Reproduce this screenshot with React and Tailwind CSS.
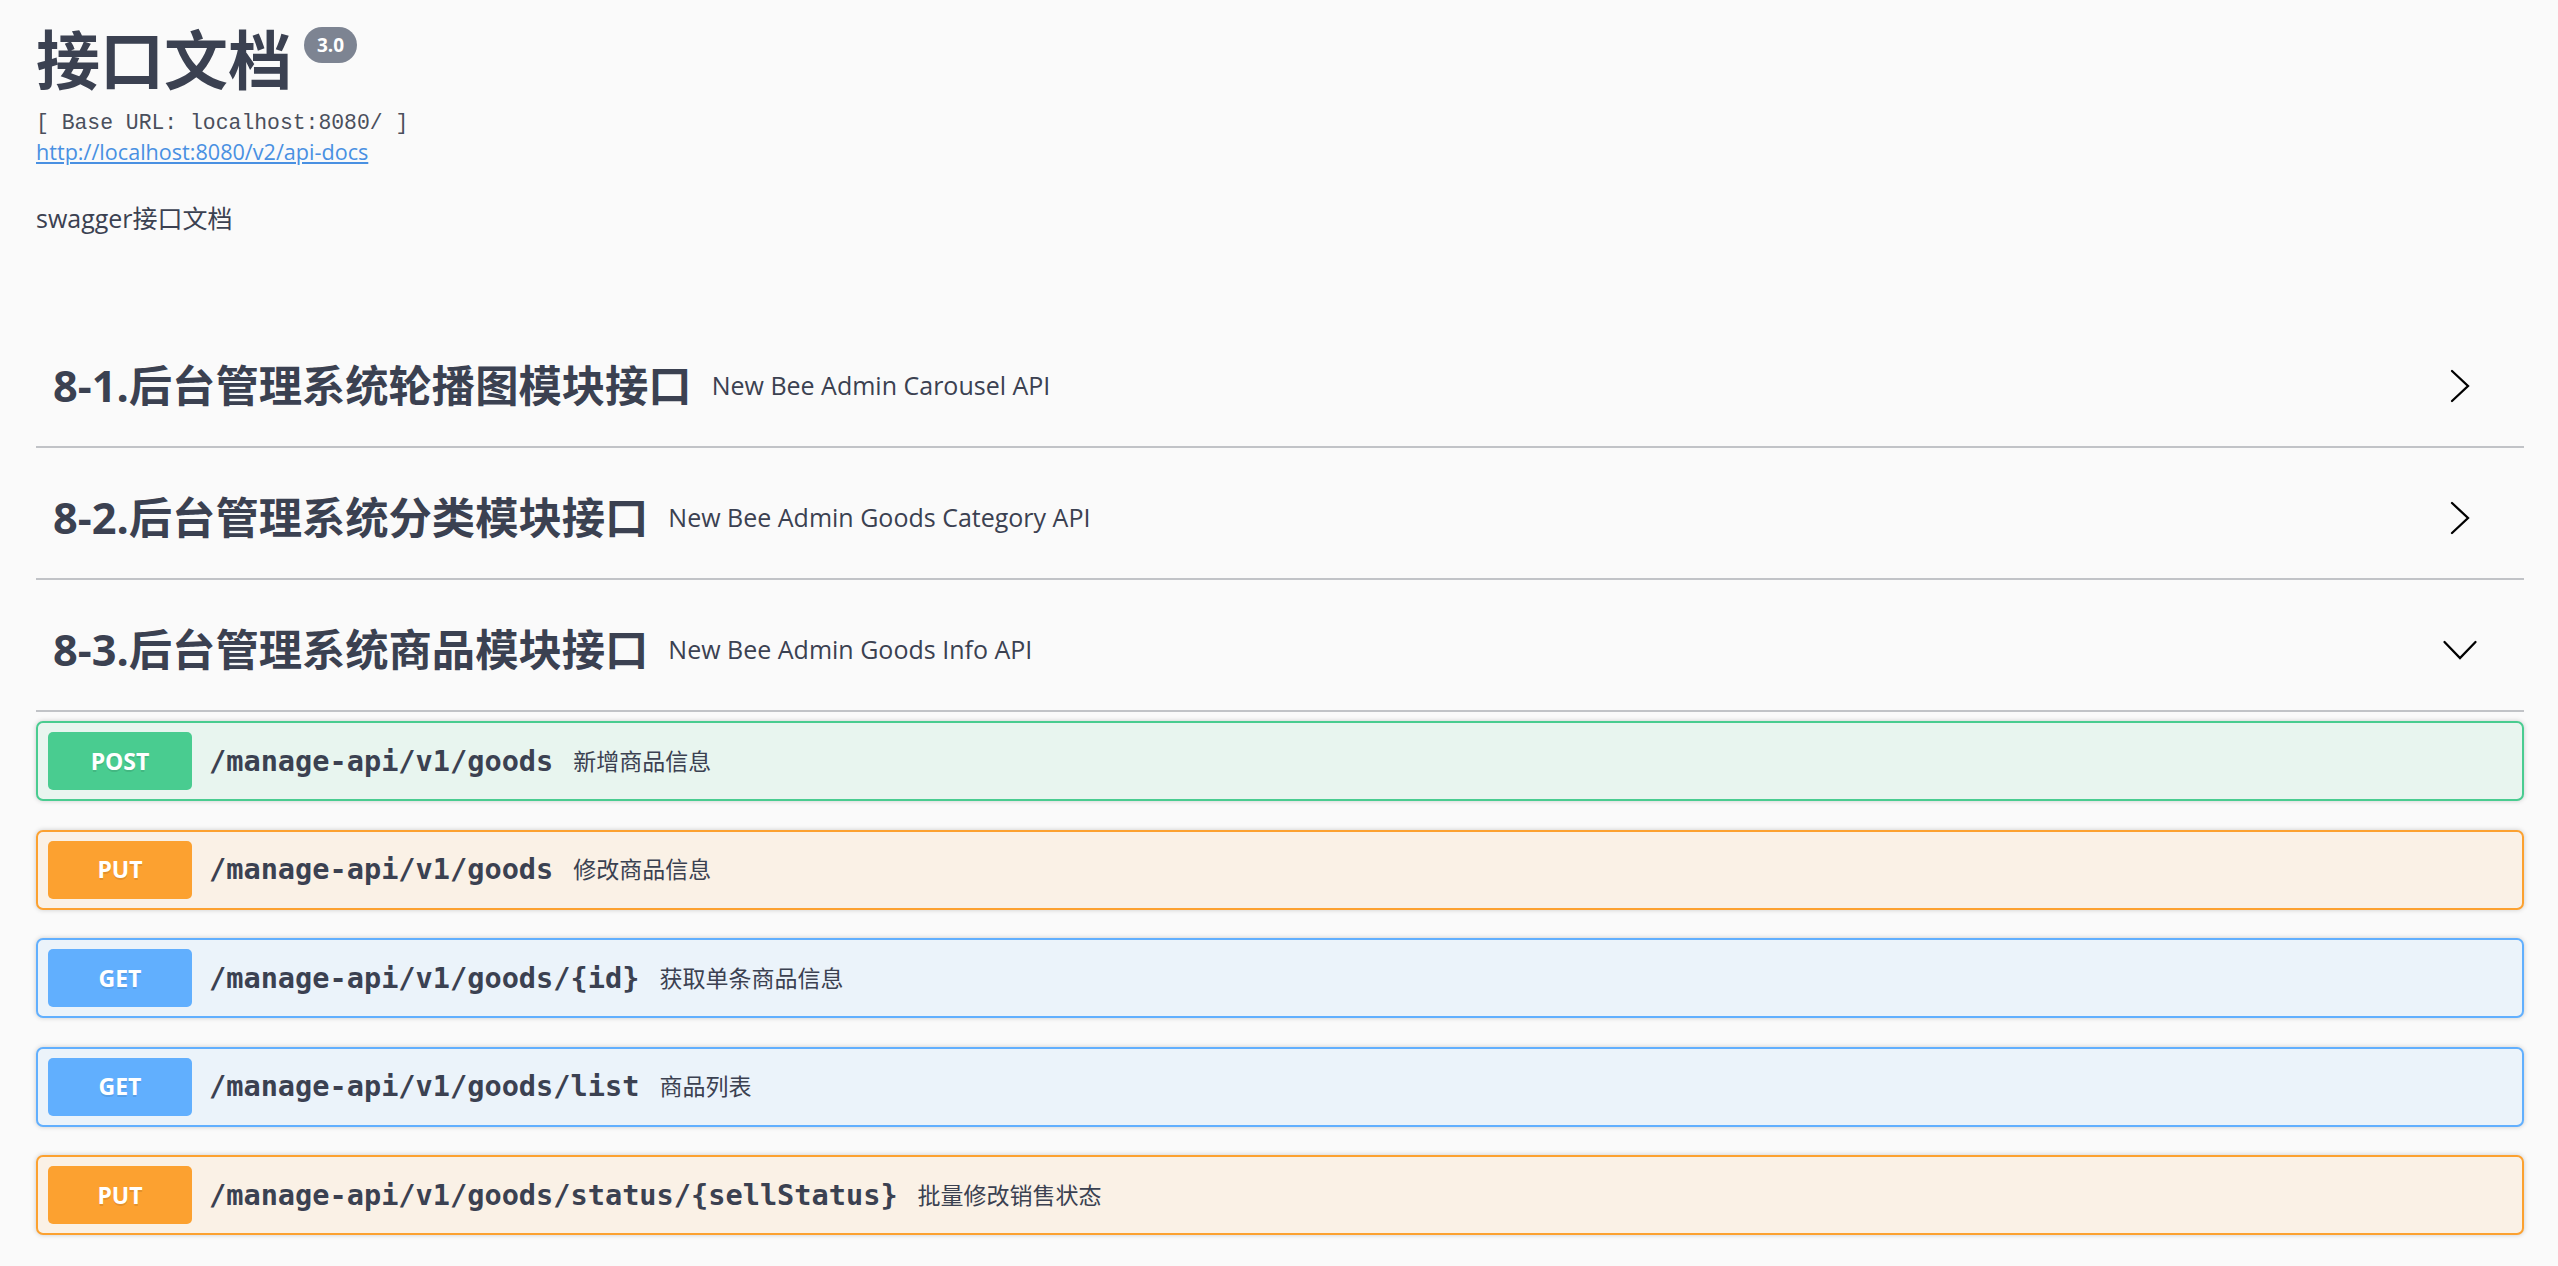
import React from "react";

const sans = { fontFamily: '"Open Sans", "Noto Sans CJK SC", sans-serif' };

const tags = [
  { title: "8-1.后台管理系统轮播图模块接口", sub: "New Bee Admin Carousel API", open: false },
  { title: "8-2.后台管理系统分类模块接口", sub: "New Bee Admin Goods Category API", open: false },
  { title: "8-3.后台管理系统商品模块接口", sub: "New Bee Admin Goods Info API", open: true },
];

const ops = [
  { m: "POST", path: "/manage-api/v1/goods", desc: "新增商品信息", box: "border-[#49cc90] bg-[#e8f5ef]", badge: "bg-[#49cc90]" },
  { m: "PUT", path: "/manage-api/v1/goods", desc: "修改商品信息", box: "border-[#fca130] bg-[#faf1e6]", badge: "bg-[#fca130]" },
  { m: "GET", path: "/manage-api/v1/goods/{id}", desc: "获取单条商品信息", box: "border-[#61affe] bg-[#ebf3fa]", badge: "bg-[#61affe]" },
  { m: "GET", path: "/manage-api/v1/goods/list", desc: "商品列表", box: "border-[#61affe] bg-[#ebf3fa]", badge: "bg-[#61affe]" },
  { m: "PUT", path: "/manage-api/v1/goods/status/{sellStatus}", desc: "批量修改销售状态", box: "border-[#fca130] bg-[#faf1e6]", badge: "bg-[#fca130]" },
];

function Chevron({ open }) {
  return (
    <svg width="36" height="36" viewBox="0 0 36 36" fill="none" stroke="#000" strokeWidth="2.3" strokeLinecap="round" strokeLinejoin="miter">
      {open ? <polyline points="2.5,10 18,26 33.5,10" /> : <polyline points="10,3 26,18 10,33" />}
    </svg>
  );
}

export default function App() {
  return (
    <div className="min-h-screen bg-[#fafafa] text-[#3b4151]" style={sans}>
      <div className="pl-[36px] pr-[34px]">
        {/* Info */}
        <div className="pt-[28px]">
          <div className="flex items-start">
            <h2 className="text-[64px] leading-[64px] font-bold text-[#3b4151]">接口文档</h2>
            <span className="ml-[12px] mt-[-1px] w-[53px] h-[36px] rounded-full bg-[#7d8492] text-white text-[19px] font-bold flex items-center justify-center">3.0</span>
          </div>
          <div className="mt-[18px] text-[21.4px] leading-[26px] text-[#4a4f5c]" style={{ fontFamily: '"Liberation Mono", monospace' }}>
            [ Base URL: localhost:8080/ ]
          </div>
          <a className="block w-fit mt-[3px] text-[21.6px] leading-[26px] text-[#4990e2] underline" href="#">
            http://localhost:8080/v2/api-docs
          </a>
          <p className="mt-[38px] text-[25px] leading-[30px]">swagger接口文档</p>
        </div>

        {/* Tags */}
        <div className="mt-[92px]">
          {tags.map((t, i) => (
            <div key={i} className="h-[123px] mb-[9px] border-b-2 border-[#c1c3c7] flex items-center pl-[17px] pr-[46px]">
              <h3 className="text-[43.3px] font-bold leading-none text-[#3b4151]">{t.title}</h3>
              <span className="ml-[20px] text-[25px] leading-none text-[#3b4151]">{t.sub}</span>
              <div className="flex-1" />
              <Chevron open={t.open} />
            </div>
          ))}
        </div>

        {/* Operations */}
        <div className="flex flex-col gap-[28.5px] pb-[40px]">
          {ops.map((o, i) => (
            <div key={i} className={`h-[80px] border-2 rounded-[7px] shadow-[0_0_5px_rgba(0,0,0,0.19)] flex items-center px-[10px] ${o.box}`}>
              <span className={`w-[144px] h-[58px] rounded-[5px] flex items-center justify-center text-white text-[23px] font-bold [text-shadow:0_2px_0_rgba(0,0,0,0.1)] ${o.badge}`}>
                {o.m}
              </span>
              <span className="ml-[17px] text-[28.6px] font-bold text-[#3b4151]" style={{ fontFamily: '"DejaVu Sans Mono", monospace' }}>
                {o.path}
              </span>
              <span className="ml-[20px] text-[23px] text-[#3b4151]">{o.desc}</span>
            </div>
          ))}
        </div>
      </div>
    </div>
  );
}
